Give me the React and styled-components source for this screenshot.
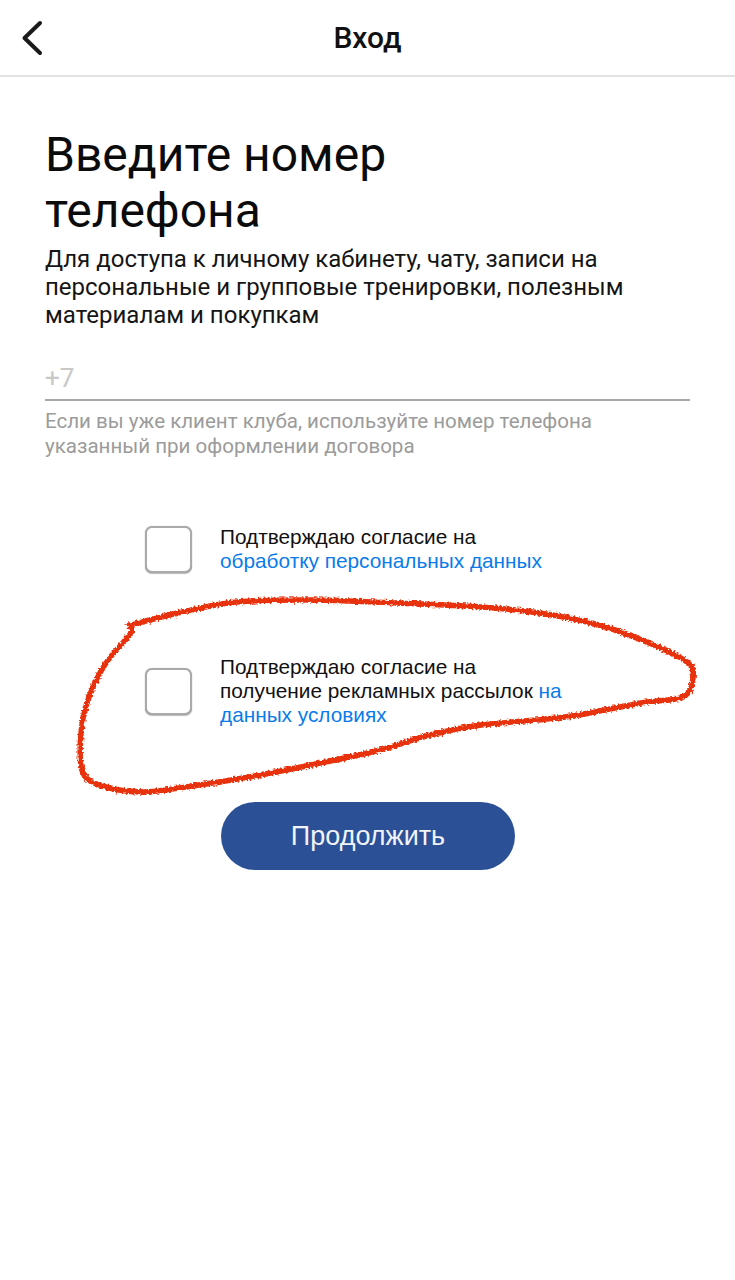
import React from "react";
import styled, { createGlobalStyle } from "styled-components";

const Global = createGlobalStyle`
  html, body { margin: 0; padding: 0; background: #fff; }
  body { font-family: Roboto, "Liberation Sans", sans-serif; }
`;

const Page = styled.div`
  position: relative;
  width: 735px;
  height: 1280px;
  overflow: hidden;
  background: #fff;
`;

const Header = styled.header`
  height: 75px;
  border-bottom: 2px solid #e2e2e2;
  position: relative;
  display: flex;
  align-items: center;
  justify-content: center;
`;

const BackButton = styled.button`
  position: absolute;
  left: 20px;
  top: 20px;
  width: 26px;
  height: 36px;
  padding: 0;
  border: 0;
  background: none;
`;

const HeaderTitle = styled.h1`
  margin: 0;
  font-size: 30px;
  font-weight: 500;
  color: #111;
`;

const Content = styled.main`
  padding: 50px 45px 0;
`;

const Title = styled.h2`
  margin: 0;
  font-size: 48px;
  line-height: 56px;
  font-weight: 400;
  color: #0b0b0b;
`;

const Lead = styled.p`
  margin: 6px 0 0;
  font-size: 24px;
  line-height: 28px;
  color: #151515;
`;

const PhoneField = styled.div`
  margin-top: 30px;
  height: 40px;
  border-bottom: 2px solid #a8a8a8;
  font-size: 26px;
  line-height: 38px;
  color: #c8c8c8;
`;

const Hint = styled.p`
  margin: 8px 0 0;
  font-size: 20.55px;
  line-height: 25px;
  color: #9b9b9b;
`;

const Consents = styled.div`
  margin-top: 66px;
  padding-left: 100px;
  display: flex;
  flex-direction: column;
  gap: 82px;
`;

const Consent = styled.label`
  display: flex;
  gap: 28px;
  align-items: center;
`;

const Box = styled.span`
  flex: none;
  width: 43px;
  height: 43px;
  border: 2px solid #aaaaaa;
  border-radius: 7px;
  background: #fff;
  box-shadow: 0 1px 1px rgba(0, 0, 0, 0.25), 0 0 1px rgba(0, 0, 0, 0.3);
`;

const ConsentText = styled.span`
  font-family: "Liberation Sans", Arial, sans-serif;
  font-size: 20.8px;
  line-height: 24px;
  color: #111;
  width: 360px;
`;

const ConsentLink = styled.a`
  color: #0a7bea;
`;

const Submit = styled.button`
  display: block;
  width: 294px;
  height: 68px;
  margin: 75px 0 0 176px;
  border: 0;
  border-radius: 34px;
  background: #2b5096;
  color: #f0f3f8;
  font-family: "Liberation Sans", Arial, sans-serif;
  font-size: 27px;
`;

const Scribble = styled.svg`
  position: absolute;
  inset: 0;
  pointer-events: none;
`;

const strokePoints = [
  [131, 625], [182, 612], [237, 602], [312, 600], [397, 603], [481, 607], [540, 613],
  [599, 625], [649, 643], [687, 662], [693, 678], [683, 697], [641, 703], [565, 717],
  [481, 725], [430, 735], [380, 750], [321, 763], [249, 777], [186, 787], [144, 792],
  [106, 787], [83, 773], [81, 733], [89, 697], [106, 663], [131, 633], [129, 625],
];

function smoothPath(pts) {
  let d = `M${pts[0][0]} ${pts[0][1]}`;
  for (let i = 0; i < pts.length - 1; i++) {
    const p0 = pts[Math.max(i - 1, 0)];
    const p1 = pts[i];
    const p2 = pts[i + 1];
    const p3 = pts[Math.min(i + 2, pts.length - 1)];
    const c1x = p1[0] + (p2[0] - p0[0]) / 6;
    const c1y = p1[1] + (p2[1] - p0[1]) / 6;
    const c2x = p2[0] - (p3[0] - p1[0]) / 6;
    const c2y = p2[1] - (p3[1] - p1[1]) / 6;
    d += ` C${c1x} ${c1y} ${c2x} ${c2y} ${p2[0]} ${p2[1]}`;
  }
  return d;
}

export default function App() {
  return (
    <Page>
      <Global />
      <Header>
        <BackButton aria-label="Назад">
          <svg width="26" height="36" viewBox="0 0 26 36" fill="none">
            <path d="M20 3 L4.5 18 L20 33" stroke="#1a1a1a" strokeWidth="4" strokeLinecap="round" strokeLinejoin="round" />
          </svg>
        </BackButton>
        <HeaderTitle>Вход</HeaderTitle>
      </Header>
      <Content>
        <Title>Введите номер<br />телефона</Title>
        <Lead>
          Для доступа к личному кабинету, чату, записи на<br />
          персональные и групповые тренировки, полезным<br />
          материалам и покупкам
        </Lead>
        <PhoneField>+7</PhoneField>
        <Hint>
          Если вы уже клиент клуба, используйте номер телефона<br />
          указанный при оформлении договора
        </Hint>
        <Consents>
          <Consent>
            <Box />
            <ConsentText>
              Подтверждаю согласие на<br />
              <ConsentLink>обработку персональных данных</ConsentLink>
            </ConsentText>
          </Consent>
          <Consent>
            <Box />
            <ConsentText>
              Подтверждаю согласие на<br />
              получение рекламных рассылок <ConsentLink>на<br />данных условиях</ConsentLink>
            </ConsentText>
          </Consent>
        </Consents>
        <Submit>Продолжить</Submit>
      </Content>
      <Scribble width="735" height="1280" viewBox="0 0 735 1280" fill="none">
        <defs>
          <filter id="crayon" x="0" y="0" width="100%" height="100%" filterUnits="userSpaceOnUse">
            <feTurbulence type="fractalNoise" baseFrequency="0.5" numOctaves="2" seed="4" />
            <feDisplacementMap in="SourceGraphic" scale="5" xChannelSelector="R" yChannelSelector="G" />
          </filter>
        </defs>
        <path
          d={smoothPath(strokePoints)}
          stroke="#e8330f"
          strokeWidth="5.5"
          strokeLinecap="round"
          strokeLinejoin="round"
          filter="url(#crayon)"
        />
      </Scribble>
    </Page>
  );
}
